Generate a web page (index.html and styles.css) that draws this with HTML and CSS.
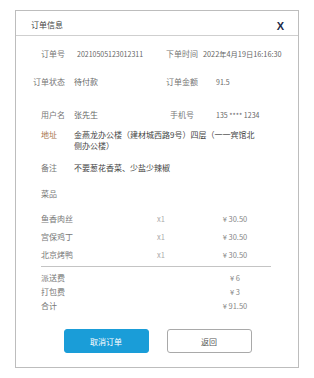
FILE: index.html
```html
<!DOCTYPE html>
<html lang="zh-CN">
<head>
<meta charset="utf-8">
<link rel="stylesheet" href="styles.css">
</head>
<body>
<div class="modal">
  <div class="header">
    <span class="title">订单信息</span>
    <span class="close">X</span>
  </div>
  <div class="info">
    <div class="row r1">
      <span class="lbl">订单号</span>
      <span class="val v1 num">20210505123012311</span>
      <span class="lbl-r">下单时间</span>
      <span class="val-r num date">2022年4月19日16:16:30</span>
    </div>
    <div class="row r2">
      <span class="lbl">订单状态</span>
      <span class="val">待付款</span>
      <span class="lbl-r">订单金额</span>
      <span class="val-r wide num">91.5</span>
    </div>
    <div class="row r3">
      <span class="lbl">用户名</span>
      <span class="val">张先生</span>
      <span class="lbl-r">手机号</span>
      <span class="val-r wide num">135 **** 1234</span>
    </div>
  </div>
  <div class="detail">
    <div class="drow addr">
      <span class="dlbl brown">地址</span>
      <span class="dval">金燕龙办公楼（建材城西路9号）四层（一一宾馆北侧办公楼）</span>
    </div>
    <div class="drow remark">
      <span class="dlbl">备注</span>
      <span class="dval">不要葱花香菜、少盐少辣椒</span>
    </div>
    <div class="drow dishes">
      <span class="dlbl">菜品</span>
    </div>
  </div>
  <div class="items">
    <div class="item"><span class="name">鱼香肉丝</span><span class="qty">x1</span><span class="price">¥ 30.50</span></div>
    <div class="item"><span class="name">宫保鸡丁</span><span class="qty">x1</span><span class="price">¥ 30.50</span></div>
    <div class="item"><span class="name">北京烤鸭</span><span class="qty">x1</span><span class="price">¥ 30.50</span></div>
  </div>
  <div class="fees">
    <div class="fee"><span class="name">派送费</span><span class="qty"></span><span class="price">¥ 6</span></div>
    <div class="fee"><span class="name">打包费</span><span class="qty"></span><span class="price">¥ 3</span></div>
    <div class="fee"><span class="name">合计</span><span class="qty"></span><span class="price">¥ 91.50</span></div>
  </div>
  <div class="actions">
    <button class="btn primary">取消订单</button>
    <button class="btn secondary">返回</button>
  </div>
</div>
</body>
</html>
```
FILE: styles.css
```css
* { box-sizing: border-box; }
html, body { margin: 0; padding: 0; background: #fff; }
body {
  padding: 10px 15px 0 15px;
  font-family: "Noto Sans CJK SC", sans-serif;
  font-size: 8px;
  color: #666;
}
.modal {
  width: 284px;
  height: 358px;
  border: 1px solid #bdbdbd;
  background: #fff;
}
.header {
  height: 25px;
  border-bottom: 1px solid #cfcfcf;
  display: flex;
  align-items: center;
  justify-content: space-between;
  padding: 2px 14px 0 15px;
}
.title { color: #444; font-size: 8px; }
.close {
  font-family: "Liberation Sans", sans-serif;
  font-weight: bold;
  font-size: 11px;
  color: #1c2a48;
  margin-top: 3px;
}
.info { padding-top: 12px; }
.row {
  display: flex;
  align-items: center;
  height: 12px;
  line-height: 12px;
  white-space: nowrap;
}
.r2 { margin-top: 16px; }
.r3 { margin-top: 21px; }
.lbl { width: 49px; text-align: right; color: #777; }
.val { margin-left: 9px; width: 92px; color: #666; }
.v1 { margin-left: 12px; width: 89px; }
.lbl-r { width: 32px; text-align: center; color: #777; }
.val-r { margin-left: 5px; color: #666; }
.val-r.wide { margin-left: 18px; }
.num { font-size: 7px; }
.date { font-size: 7.3px; }

.detail { padding-left: 25px; }
.drow { display: flex; line-height: 11px; }
.addr { margin-top: 8px; }
.remark { margin-top: 11px; }
.dishes { margin-top: 15px; }
.dlbl { width: 33px; color: #777; flex: none; }
.dlbl.brown { color: #a8764f; }
.dval { width: 184px; color: #444; }

.items { margin-top: 14px; padding: 0 27px 0 25px; }
.item, .fee {
  display: flex;
  align-items: center;
  height: 12px;
  line-height: 12px;
}
.item + .item { margin-top: 6px; }
.name { width: 116px; color: #777; }
.qty { width: 58px; color: #aaa; font-size: 7.5px; }
.price { width: 40px; text-align: center; color: #888; font-size: 7.5px; }
.fees {
  margin: 5px 27px 0 25px;
  border-top: 1px solid #c4c4c4;
  padding-top: 5px;
}
.fee + .fee { margin-top: 2px; }

.actions {
  display: flex;
  justify-content: center;
  gap: 18px;
  margin-top: 17px;
  padding-left: 1px;
}
.btn {
  width: 85px;
  height: 24px;
  border-radius: 3px;
  font-family: "Noto Sans CJK SC", sans-serif;
  font-size: 8px;
  padding: 0;
  cursor: pointer;
}
.primary {
  background: #1a9dd8;
  border: 1px solid #1a9dd8;
  color: #fff;
}
.secondary {
  background: #fff;
  border: 1px solid #a9a9a9;
  color: #555;
}
```
